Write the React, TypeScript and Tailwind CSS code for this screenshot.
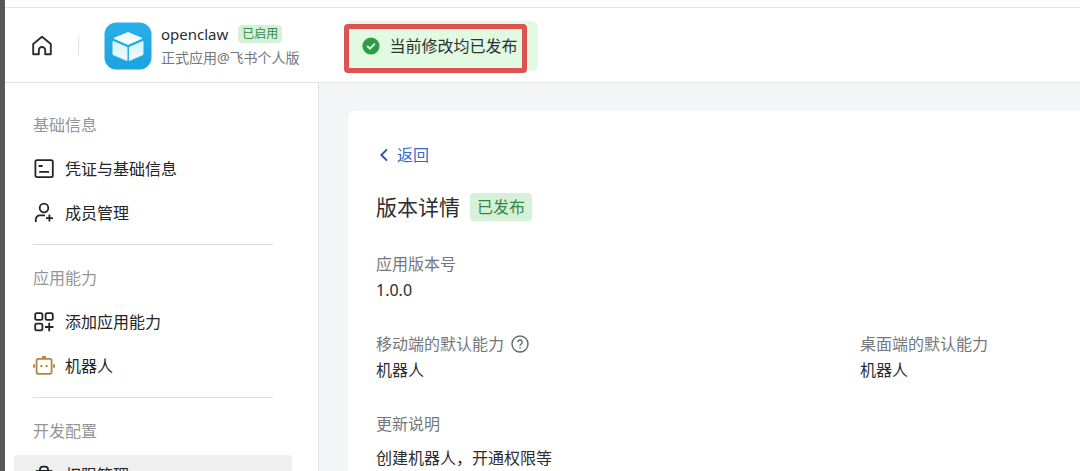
import type { ReactNode } from "react";

type IconProps = { className?: string; children: ReactNode };

function Icon({ className = "", children }: IconProps) {
  return (
    <svg
      viewBox="0 0 22 22"
      className={`h-[22px] w-[22px] shrink-0 ${className}`}
      fill="none"
      stroke="currentColor"
      strokeWidth="1.8"
      strokeLinejoin="round"
      aria-hidden="true"
    >
      {children}
    </svg>
  );
}

const CredentialIcon = () => (
  <Icon>
    <rect x="2.4" y="2.2" width="17.4" height="17" rx="1.6" />
    <path d="M5.6 8h4M6.2 13.8H16" />
  </Icon>
);

const MemberIcon = () => (
  <Icon>
    <circle cx="11" cy="6" r="4.3" />
    <path d="M2.8 20v-2.6a4 4 0 0 1 4-4H12M16.4 12.6v7M12.9 16.1h7" />
  </Icon>
);

const AddAbilityIcon = () => (
  <Icon>
    <rect x="2.2" y="2.2" width="7.2" height="6.6" rx="1.6" />
    <rect x="12.6" y="2.2" width="7.2" height="6.6" rx="1.6" />
    <rect x="2.2" y="12.6" width="7.2" height="6.8" rx="1.6" />
    <path d="M16.2 11.8v8.4M12 16h8.4" />
  </Icon>
);

const RobotIcon = () => (
  <Icon className="text-[#b9823a]">
    <rect x="3.6" y="3.8" width="15" height="15" rx="1.8" />
    <path d="M11 1v3M9 1.8h4M1.1 9.2v3.6M21 9.2v3.6" />
    <path d="M7.4 11h2M12.6 11h2" strokeWidth="2" />
  </Icon>
);

const PermissionIcon = () => (
  <Icon>
    <path d="M7 7V5.6a3 3 0 0 1 3-3h2a3 3 0 0 1 3 3V7" />
    <rect x="2.6" y="7" width="16.8" height="12.4" rx="1.6" />
    <path d="M11 11v4" />
  </Icon>
);

function NavItem({ icon, label, active = false }: { icon: ReactNode; label: string; active?: boolean }) {
  return (
    <a
      href="#"
      aria-current={active ? "page" : undefined}
      className={`flex h-10 items-center gap-2.5 rounded px-[19px] text-[#222427] ${active ? "bg-[#efefef]" : ""}`}
    >
      {icon}
      {label}
    </a>
  );
}

function NavGroup({ title, children }: { title: string; children: ReactNode }) {
  return (
    <section>
      <h2 className="mb-3 px-[19px] leading-6 text-[#939699]">{title}</h2>
      <div className="flex flex-col gap-1">{children}</div>
    </section>
  );
}

const Divider = () => <hr className="mx-[19px] mt-[11px] mb-[21px] border-[#dcdddf]" />;

function Field({ label, children, help = false }: { label: string; children: ReactNode; help?: boolean }) {
  return (
    <div>
      <dt className="flex items-center gap-1.5 leading-[26px] text-[#74777b]">
        {label}
        {help && (
          <button type="button" aria-label="帮助">
            <svg viewBox="0 0 20 20" className="h-5 w-5" fill="none" stroke="#65686c" strokeWidth="1.4" aria-hidden="true">
              <circle cx="10" cy="10" r="8" />
              <path d="M7.8 8.2a2.2 2.2 0 1 1 3.3 1.9c-.8.5-1.1.8-1.1 1.7" />
              <path d="M10 13v1.5" />
            </svg>
          </button>
        )}
      </dt>
      <dd className="leading-[26px] text-[#2b2d30]">{children}</dd>
    </div>
  );
}

export default function App() {
  return (
    <div className="flex h-screen overflow-hidden border-l-5 border-[#58585a] bg-white font-['Noto_Sans','Noto_Sans_CJK_SC',sans-serif] text-base">
      <div className="flex min-w-0 flex-1 flex-col">
        <header className="mt-[7px] flex h-[76px] shrink-0 items-center border-y border-[#e3e4e6] pt-0.5 pl-[26px]">
          <a href="#" aria-label="首页" className="text-[#2b2d30]">
            <Icon>
              <path d="M2.2 19.2V9L11 1.8 19.8 9v10.2h-5.6v-4a3.2 3.2 0 0 0-6.4 0v4z" strokeWidth="1.9" />
            </Icon>
          </a>
          <span className="ml-[25px] h-[18px] w-px bg-[#dddee0]" />
          <svg viewBox="0 0 48 48" className="ml-[25px] h-12 w-12 shrink-0" aria-hidden="true">
            <defs>
              <linearGradient id="logoBackground" x1="0" y1="0" x2="0" y2="1">
                <stop offset="0" stopColor="#28b0ea" />
                <stop offset="1" stopColor="#1ba2e2" />
              </linearGradient>
              <linearGradient id="cubeSide" x1="0" y1="0" x2="0" y2="1">
                <stop offset="0" stopColor="#d3f3fd" />
                <stop offset="1" stopColor="#f1fcff" />
              </linearGradient>
            </defs>
            <rect x="0.5" y="0.5" width="47" height="47" rx="12" fill="url(#logoBackground)" />
            <g strokeLinejoin="round" strokeWidth="1">
              <path d="M24 10.5 38 16.3 24 22.4 10 16.3z" fill="#f2fcff" stroke="#f2fcff" />
              <path d="M9 19.4 23 25.3v13.2L9 32.6z" fill="url(#cubeSide)" stroke="#dff7fe" />
              <path d="M39 19.4 25.4 25.3v13.2L39 32.6z" fill="url(#cubeSide)" stroke="#dff7fe" />
            </g>
          </svg>
          <div className="ml-[9px] shrink-0">
            <div className="flex items-center gap-2.5 text-[15px] leading-6 text-[#2b2d30]">
              openclaw
              <span className="rounded bg-[#d5f1d8] px-1 text-xs leading-[18px] text-[#3c8548]">已启用</span>
            </div>
            <p className="text-sm leading-6 text-[#74777b]">正式应用@飞书个人版</p>
          </div>
          <div
            role="status"
            className="relative ml-[45px] flex h-[50px] shrink-0 items-center gap-[9px] rounded-md bg-[#e2f9e2] pr-5 pl-4 text-[#2b352e]"
          >
            <svg viewBox="0 0 20 20" className="h-5 w-5" aria-hidden="true">
              <circle cx="10" cy="10" r="8.6" fill="#2e9e44" />
              <path d="m6.2 10 2.7 2.7 5-5" fill="none" stroke="#e4f8e5" strokeWidth="1.8" />
            </svg>
            当前修改均已发布
            <span className="absolute top-[3px] right-[11px] bottom-[-2px] left-[-1px] rounded-sm border-5 border-[#dc5352]" />
          </div>
        </header>

        <div className="flex min-h-0 flex-1">
          <aside className="w-[314px] shrink-0 overflow-hidden border-r border-[#e3e4e6] pt-[30px] pr-[26px] pl-[9px]">
            <nav>
              <NavGroup title="基础信息">
                <NavItem icon={<CredentialIcon />} label="凭证与基础信息" />
                <NavItem icon={<MemberIcon />} label="成员管理" />
              </NavGroup>
              <Divider />
              <NavGroup title="应用能力">
                <NavItem icon={<AddAbilityIcon />} label="添加应用能力" />
                <NavItem icon={<RobotIcon />} label="机器人" />
              </NavGroup>
              <Divider />
              <NavGroup title="开发配置">
                <NavItem icon={<PermissionIcon />} label="权限管理" active />
              </NavGroup>
            </nav>
          </aside>

          <main className="flex min-w-0 flex-1 overflow-hidden bg-[#f4f5f6] pt-7 pl-[29px]">
            <article className="flex-1 rounded-tl-lg bg-white pt-8 pl-7">
              <a href="#" className="inline-flex h-6 items-center gap-[3px] text-[#3a66c4]">
                <svg viewBox="0 0 18 18" className="h-[18px] w-[18px]" fill="none" stroke="#2f54b4" strokeWidth="2" aria-hidden="true">
                  <path d="m11 3.4-5.6 5.6 5.6 5.6" />
                </svg>
                返回
              </a>
              <div className="mt-[21px] flex items-center gap-2.5">
                <h1 className="text-[21px] leading-8 text-[#2b2d30]">版本详情</h1>
                <span className="rounded bg-[#d5f1d8] px-[7px] leading-7 text-[#3c8548]">已发布</span>
              </div>
              <dl className="mt-7 grid grid-cols-[11fr_5fr] gap-y-7">
                <div className="col-span-2">
                  <Field label="应用版本号">1.0.0</Field>
                </div>
                <Field label="移动端的默认能力" help>
                  机器人
                </Field>
                <Field label="桌面端的默认能力">机器人</Field>
                <div className="col-span-2">
                  <Field label="更新说明">
                    <p className="mt-2">创建机器人，开通权限等</p>
                  </Field>
                </div>
              </dl>
            </article>
          </main>
        </div>
      </div>
    </div>
  );
}
